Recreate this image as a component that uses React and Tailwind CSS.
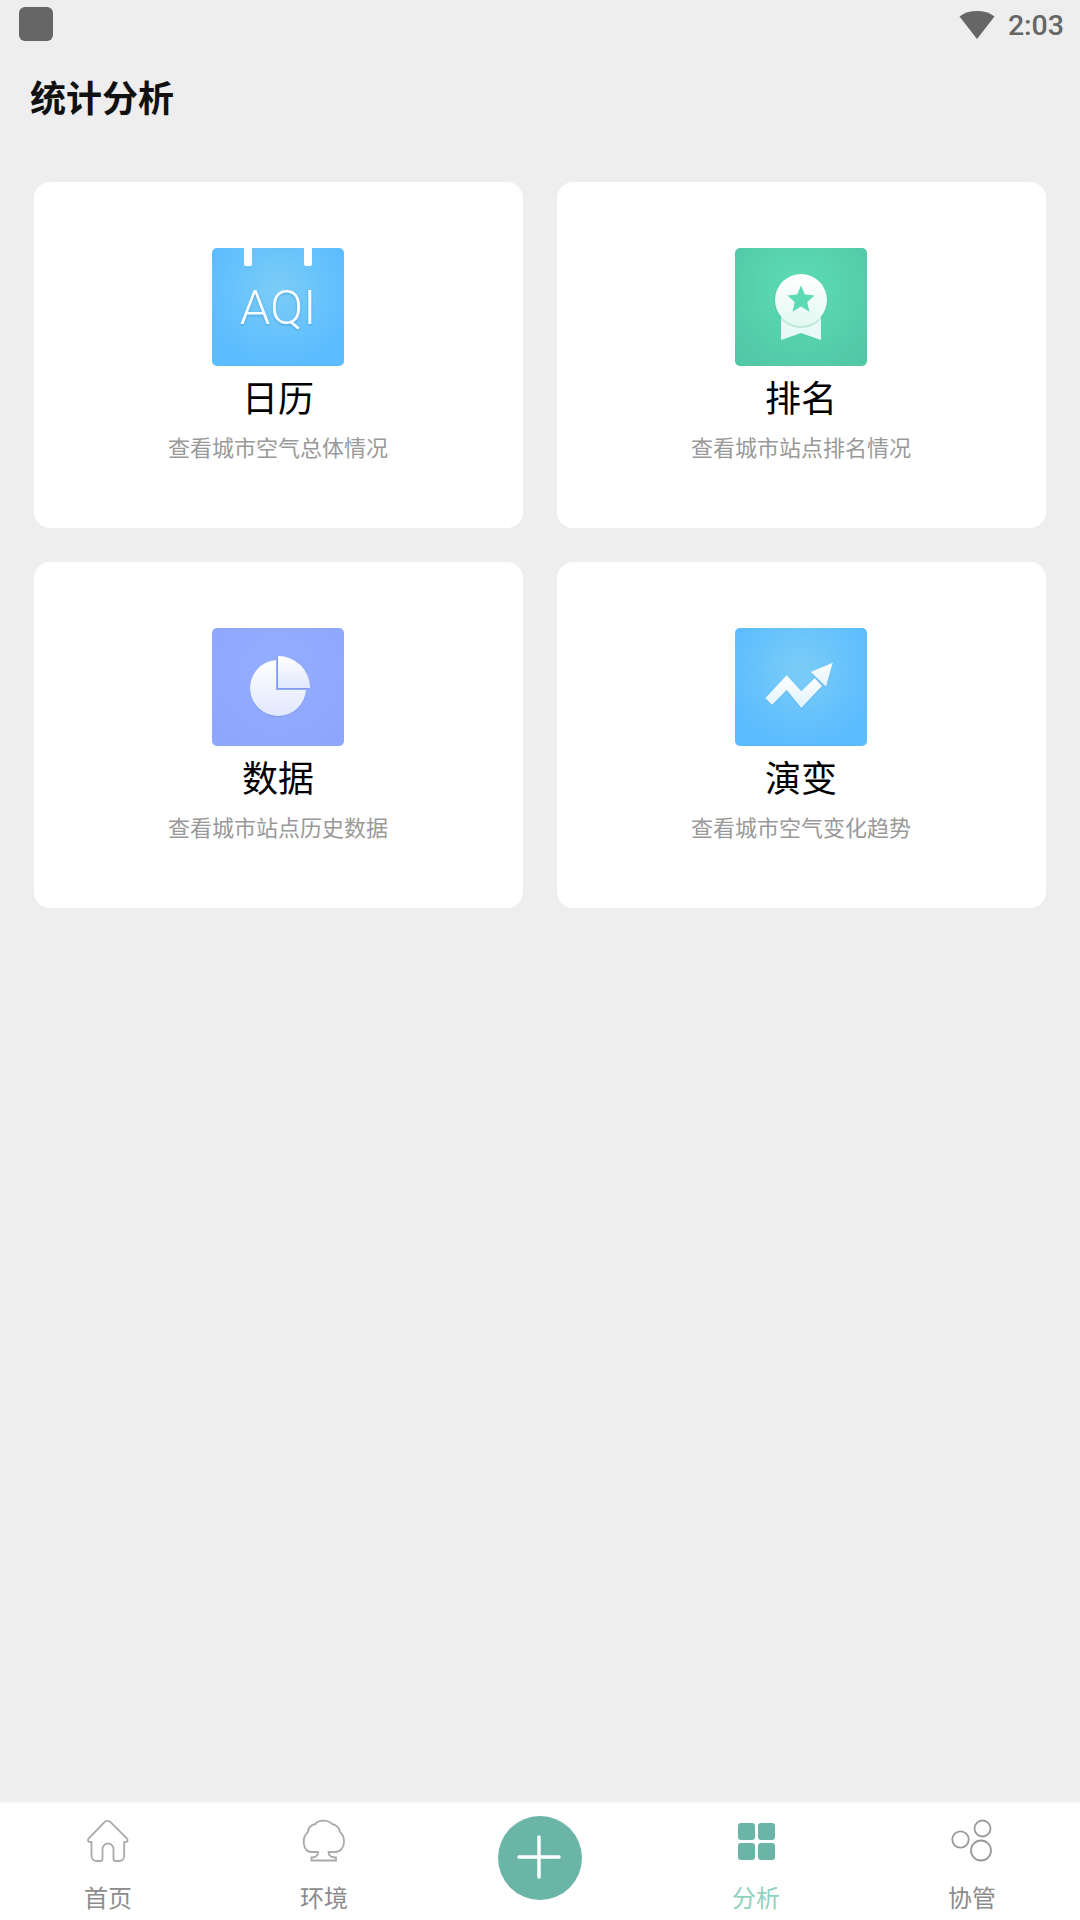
const FONT = "font-['Noto_Sans_CJK_SC','Noto_Sans',sans-serif]";

function AqiIcon() {
  return (
    <div className="relative flex h-[118px] w-[132px] items-center justify-center rounded-[5px] bg-[radial-gradient(circle_at_50%_35%,#7bcdf6,#5bbcff_75%)]">
      <div className="absolute left-[32px] top-0 h-[18px] w-[8px] rounded-b-[2px] bg-white" />
      <div className="absolute left-[92px] top-0 h-[18px] w-[8px] rounded-b-[2px] bg-white" />
      <span className="font-['Roboto',sans-serif] text-[49px] font-light leading-none text-[#f6fcff] drop-shadow-[0_1px_1px_rgba(0,80,140,0.3)]">
        AQI
      </span>
    </div>
  );
}

function MedalIcon() {
  return (
    <div className="h-[118px] w-[132px] rounded-[5px] bg-[radial-gradient(circle_at_50%_35%,#5cddb5,#53c8a6_85%)]">
      <svg width="132" height="118" viewBox="0 0 132 118">
        <defs>
          <linearGradient id="m1" x1="0" y1="0" x2="0" y2="1">
            <stop offset="0" stopColor="#ffffff" />
            <stop offset="1" stopColor="#e2f9f2" />
          </linearGradient>
        </defs>
        <path d="M46 62H86V92L66 85L46 92Z" fill="#e8faf5" />
        <circle cx="66" cy="53" r="27" fill="#3fae8e" opacity="0.25" />
        <circle cx="66" cy="52" r="26" fill="url(#m1)" />
        <path
          d="M66 37.500L69.900 46.600L79.500 47.500L72.300 54L74.400 63.700L66 58.600L57.600 63.700L59.700 54L52.500 47.500L62.100 46.600Z"
          fill="#5cdab4"
        />
      </svg>
    </div>
  );
}

function PieIcon() {
  return (
    <div className="h-[118px] w-[132px] rounded-[5px] bg-[radial-gradient(circle_at_50%_35%,#93aeff,#8fa6fe_85%)]">
      <svg width="132" height="118" viewBox="0 0 132 118">
        <defs>
          <linearGradient id="p1" x1="0" y1="0" x2="0" y2="1">
            <stop offset="0" stopColor="#ffffff" />
            <stop offset="1" stopColor="#e1e8fd" />
          </linearGradient>
        </defs>
        <path d="M64 32.100A28 28 0 1 0 94 62.500H64Z" fill="#6f86d8" opacity="0.45" transform="translate(0 1)" />
        <path d="M64 32.100A28 28 0 1 0 94 62H64Z" fill="url(#p1)" />
        <path d="M66 28A32 32 0 0 1 98 60H66Z" fill="#7b90e0" opacity="0.6" transform="translate(-1 1)" />
        <path d="M66 28A32 32 0 0 1 98 60H66Z" fill="url(#p1)" />
      </svg>
    </div>
  );
}

function TrendIcon() {
  return (
    <div className="h-[118px] w-[132px] rounded-[5px] bg-[radial-gradient(circle_at_50%_35%,#7bcdf6,#5bbcff_75%)]">
      <svg width="132" height="118" viewBox="0 0 132 118">
        <defs>
          <linearGradient id="t1" x1="0" y1="0" x2="0" y2="1">
            <stop offset="0" stopColor="#ffffff" />
            <stop offset="1" stopColor="#dff3ff" />
          </linearGradient>
        </defs>
        <g opacity="0.3" transform="translate(0 1)" fill="#2a7fc0">
          <path d="M30.300 70.300L51.700 47.300L66.300 63.300L79.700 50.300L87 58L66.300 80L51.700 62L37 77Z" />
          <path d="M97.700 34.700L75.700 44L91 58.700Z" />
        </g>
        <path d="M30.300 70.300L51.700 47.300L66.300 63.300L79.700 50.300L87 58L66.300 80L51.700 62L37 77Z" fill="url(#t1)" />
        <path d="M97.700 34.700L75.700 44L91 58.700Z" fill="url(#t1)" />
      </svg>
    </div>
  );
}

function Card({ icon, title, desc }) {
  return (
    <div className="flex h-[346px] flex-col items-center rounded-[16px] bg-white pr-[1px] pt-[66px]">
      {icon}
      <div className="mt-[8px] text-[36px] leading-[44px] text-black">{title}</div>
      <div className="mt-[12px] text-[22px] leading-[32px] text-[#999999]">{desc}</div>
    </div>
  );
}

function NavItem({ icon, label, active }) {
  return (
    <div className="flex flex-col items-center pt-[17px]">
      <div className="flex h-[42px] items-center justify-center">{icon}</div>
      <div className={`mt-[19px] text-[24px] leading-[32px] ${active ? "text-[#8fd1bf]" : "text-[#8c8c8c]"}`}>
        {label}
      </div>
    </div>
  );
}

export default function App() {
  return (
    <div className={`flex h-[1920px] w-[1080px] flex-col bg-[#eeeeee] ${FONT}`}>
      <div className="flex h-[52px] items-start justify-between pl-[19px] pr-[16px]">
        <div className="mt-[7px] h-[34px] w-[34px] rounded-[6px] bg-[#666666]" />
        <div className="flex items-center">
          <svg width="36" height="30" viewBox="0 0 36 30" className="mt-[7px]">
            <path d="M0.500 6.500C10 -0.800 26 -0.800 35.500 6.500L18 29Z" fill="#666666" />
          </svg>
          <span className="ml-[13px] mt-[9px] font-['Roboto',sans-serif] text-[28.5px] font-medium leading-[34px] text-[#666666]">
            2:03
          </span>
        </div>
      </div>

      <h1 className="ml-[30px] mt-[17px] text-[36px] font-bold leading-[54px] text-[#111111]">统计分析</h1>

      <div className="mx-[34px] mt-[59px] grid grid-cols-2 gap-[34px]">
        <Card icon={<AqiIcon />} title="日历" desc="查看城市空气总体情况" />
        <Card icon={<MedalIcon />} title="排名" desc="查看城市站点排名情况" />
        <Card icon={<PieIcon />} title="数据" desc="查看城市站点历史数据" />
        <Card icon={<TrendIcon />} title="演变" desc="查看城市空气变化趋势" />
      </div>

      <div className="flex-1" />

      <div className="grid h-[119px] grid-cols-5 border-t-2 border-[#f6f6f6] bg-white">
        <NavItem
          label="首页"
          icon={
            <svg width="44" height="44" viewBox="-1 -1 44 44" fill="none" stroke="#aaaaaa" strokeWidth="1.8">
              <path d="M17.500 2.200a4 4 0 0 1 6 0L40 18.500c1.500 1.800 .3 4-2.800 3.500V36a5 5 0 0 1-5 5H28.500a2 2 0 0 1-2-2V29a5.500 5.500 0 0 0-11 0V39a2 2 0 0 1-2 2H9.500a5 5 0 0 1-5-5V22C1.300 22.500 0 20.300 1.500 18.500Z" />
            </svg>
          }
        />
        <NavItem
          label="环境"
          icon={
            <svg width="44" height="44" viewBox="-1 -1 44 44" fill="none" stroke="#aaaaaa" strokeWidth="1.8">
              <path d="M15 32H8C3 32 .7 26.500 .7 22C.7 17.500 2.500 14 5 12C5 7.500 8.500 4.500 12.500 4C14 1.500 17.500 .7 20.700 .7C24 .7 27 1.800 29 4C33 4.500 36.500 8 37 12C39.500 14 41 18 41 22C41 27.500 37 32 32 32H25.500C25.500 35 27.500 37.500 33 37.500V40.500H8.500V37.500C13 37.500 15 35 15 32Z" />
            </svg>
          }
        />
        <div className="flex justify-center pt-[13px]">
          <div className="flex h-[84px] w-[84px] items-center justify-center rounded-full bg-[#6bb4a8]">
            <svg width="44" height="44" viewBox="0 0 44 44" stroke="#ffffff" strokeWidth="3.500" strokeLinecap="round" className="-translate-x-[1px] -translate-y-[1px]">
              <path d="M22 2V42M2 22H42" />
            </svg>
          </div>
        </div>
        <NavItem
          active
          label="分析"
          icon={
            <div className="grid grid-cols-2 gap-[3px]">
              <div className="h-[17px] w-[17px] rounded-[3px] bg-[#6bb4a8]" />
              <div className="h-[17px] w-[17px] rounded-[3px] bg-[#6bb4a8]" />
              <div className="h-[17px] w-[17px] rounded-[3px] bg-[#6bb4a8]" />
              <div className="h-[17px] w-[17px] rounded-[3px] bg-[#6bb4a8]" />
            </div>
          }
        />
        <NavItem
          label="协管"
          icon={
            <svg width="44" height="44" viewBox="0 0 44 44" fill="none" stroke="#999999" strokeWidth="1.8">
              <circle cx="10.500" cy="20.500" r="8.200" />
              <circle cx="32.500" cy="9.500" r="8" />
              <circle cx="31" cy="31.500" r="10" />
            </svg>
          }
        />
      </div>
    </div>
  );
}
